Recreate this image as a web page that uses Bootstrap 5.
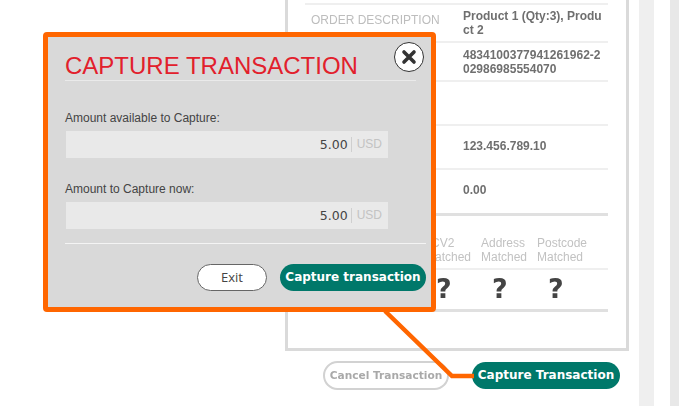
<!DOCTYPE html>
<html lang="en">
<head>
<meta charset="utf-8">
<title>Capture Transaction</title>
<link href="https://cdn.jsdelivr.net/npm/bootstrap@5.3.0/dist/css/bootstrap.min.css" rel="stylesheet">
<style>
html,body{margin:0;background:#fff;overflow:hidden;}
.stage{width:679px;height:406px;overflow:hidden;font-family:"Liberation Sans",Arial,sans-serif;}
.backdrop{width:679px;height:406px;padding-left:285px;}
.order-col{width:344px;}
.order-panel{height:352px;margin-top:-1px;border:3px solid #dadada;border-top:0;padding:4px 18px 0 17px;filter:blur(.6px);}
.order-row{border-top:2px solid #efefef;padding-left:6px;font-size:12px;color:#777;}
.order-row.r1{height:38px;}
.order-row.r2{height:39px;}
.order-row.r3{height:44px;}
.order-row.r4{height:44px;}
.order-row.r5{height:45px;}
.lbl{width:152px;color:#bdbdbd;flex:none;}
.r1 .lbl{margin-top:-7px;}
.val{width:142px;font-weight:700;line-height:14px;word-break:break-all;color:#6f6f6f;}
.r1 .val{margin-top:-1px;}
.r4 .val{margin-top:-2px;}
.r5 .val{margin-top:-4px;}
.checks{border-top:3px solid #e0e0e0;border-bottom:3px solid #e0e0e0;height:99px;color:#c2c2c2;font-size:12px;}
.check-head{height:54px;border-bottom:2px solid #efefef;padding-left:120px;padding-top:20px;line-height:14px;}
.check-col{width:56px;}
.cv-mark{padding-left:6px;}
.check-vals{padding-left:131px;font:700 27px/38px "DejaVu Sans",sans-serif;color:#444;}
.check-q{width:56px;}
.footer-btns{padding-left:38px;margin-top:10px;}
.cancel-pill{width:126px;height:29px;border:2px solid #d2d2d2;border-radius:15px;font:700 10.6px/25px "DejaVu Sans",sans-serif;color:#a9a9a9;text-align:center;filter:blur(.5px);white-space:nowrap;}
.pill-green{background:#00786a;color:#fff;border-radius:14px;height:27px;font:700 12px/27px "DejaVu Sans",sans-serif;text-align:center;white-space:nowrap;}
.pill-outer{width:148px;margin-left:23px;margin-top:1px;}
.stripe-a{width:15px;margin-left:10px;background:#efefef;}
.stripe-b{width:16px;}
.stripe-c{width:9px;background:#e8e8e8;}
.connector{position:absolute;left:0;top:0;pointer-events:none;}
.capture-box{position:absolute;left:43px;top:32px;width:393px;height:280px;background:#d9d9d9;border:5px solid #ff6600;border-radius:4px;padding:0 5px 0 17px;}
.box-title{font-size:24px;line-height:28px;color:#e2202c;font-weight:400;margin:15px 0 0;height:29px;width:351px;border-bottom:1px solid #eaeaea;white-space:nowrap;}
.close-x{position:absolute;left:346px;top:5px;width:30px;height:30px;border-radius:50%;background:#fff;border:1.5px solid #333;padding:0;}
.close-x svg{display:block;margin:auto;}
.fld-label{font-size:12px;line-height:14px;color:#444;margin:0 0 6px;}
.fld-first{margin-top:30px;}
.fld-second{margin-top:24px;}
.amount{margin-left:1px;width:322px;height:27px;background:#e9e9e9;padding-right:6px;}
.amount-num{font:12.5px/27px "DejaVu Sans",sans-serif;color:#444;padding-right:3px;}
.amount-cur{font-size:12px;line-height:15px;color:#c3c3c3;border-left:1px solid #cfcfcf;padding-left:5px;}
.box-rule{border-top:1px solid #f4f4f4;margin-top:14px;}
.box-actions{margin-top:20px;gap:13px;}
.exit-pill{width:70px;height:27px;background:#fff;border:1px solid #666;border-radius:14px;font:13px/25px "Open Sans","DejaVu Sans",sans-serif;color:#444;text-align:center;}
.pill-inner{width:146px;}
</style>
</head>
<body>
<div class="stage position-relative">
  <div class="backdrop d-flex">
    <div class="order-col">
      <div class="order-panel">
        <div class="order-row r1 d-flex align-items-center"><div class="lbl">ORDER DESCRIPTION</div><div class="val">Product 1 (Qty:3), Product 2</div></div>
        <div class="order-row r2 d-flex align-items-center"><div class="lbl"></div><div class="val">483410037794126196​2-202986985554070</div></div>
        <div class="order-row r3"></div>
        <div class="order-row r4 d-flex align-items-center"><div class="lbl"></div><div class="val">123.456.789.10</div></div>
        <div class="order-row r5 d-flex align-items-center"><div class="lbl"></div><div class="val">0.00</div></div>
        <div class="checks">
          <div class="check-head d-flex">
            <div class="check-col"><span class="cv-mark">CV2</span><br>Matched</div>
            <div class="check-col">Address<br>Matched</div>
            <div class="check-col">Postcode<br>Matched</div>
          </div>
          <div class="check-vals d-flex"><div class="check-q">?</div><div class="check-q">?</div><div class="check-q">?</div></div>
        </div>
      </div>
      <div class="footer-btns d-flex">
        <div class="cancel-pill">Cancel Transaction</div>
        <div class="pill-green pill-outer">Capture Transaction</div>
      </div>
    </div>
    <div class="stripe-a"></div>
    <div class="stripe-b"></div>
    <div class="stripe-c"></div>
  </div>

  <svg class="connector" width="679" height="406" viewBox="0 0 679 406" aria-hidden="true">
    <polyline points="385,311 452,376 474,376" fill="none" stroke="#ff6600" stroke-width="4.5"/>
  </svg>

  <div class="capture-box">
    <h1 class="box-title">CAPTURE TRANSACTION</h1>
    <button type="button" class="close-x" aria-label="Close">
      <svg width="16" height="16" viewBox="0 0 16 16"><path d="M3 3l10 10M13 3L3 13" stroke="#333" stroke-width="3.6" fill="none" stroke-linecap="round"/></svg>
    </button>
    <p class="fld-label fld-first">Amount available to Capture:</p>
    <div class="amount d-flex align-items-center justify-content-end"><span class="amount-num">5.00</span><span class="amount-cur">USD</span></div>
    <p class="fld-label fld-second">Amount to Capture now:</p>
    <div class="amount d-flex align-items-center justify-content-end"><span class="amount-num">5.00</span><span class="amount-cur">USD</span></div>
    <div class="box-rule"></div>
    <div class="box-actions d-flex justify-content-end">
      <div class="exit-pill">Exit</div>
      <div class="pill-green pill-inner">Capture transaction</div>
    </div>
  </div>
</div>
<script src="https://cdn.jsdelivr.net/npm/bootstrap@5.3.0/dist/js/bootstrap.bundle.min.js"></script>
</body>
</html>
